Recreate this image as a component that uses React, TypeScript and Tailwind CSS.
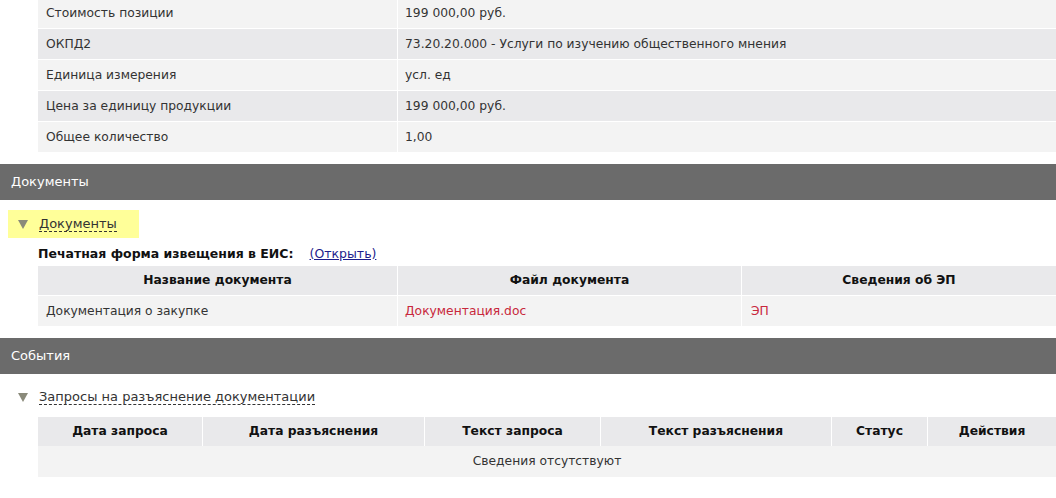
const font = { fontFamily: '"DejaVu Sans", Verdana, sans-serif' };

const positionRows = [
  { label: "Стоимость позиции", value: "199 000,00 руб." },
  { label: "ОКПД2", value: "73.20.20.000 - Услуги по изучению общественного мнения" },
  { label: "Единица измерения", value: "усл. ед" },
  { label: "Цена за единицу продукции", value: "199 000,00 руб." },
  { label: "Общее количество", value: "1,00" },
];

const requestCols = [
  { title: "Дата запроса", w: "w-[165px]" },
  { title: "Дата разъяснения", w: "w-[222px]" },
  { title: "Текст запроса", w: "w-[176px]" },
  { title: "Текст разъяснения", w: "w-[231px]" },
  { title: "Статус", w: "w-[96px]" },
  { title: "Действия", w: "flex-1" },
];

function Triangle() {
  return (
    <svg width="10" height="9" viewBox="0 0 10 9" className="shrink-0">
      <path d="M0 0 L10 0 L5 9 Z" fill="#8a8a7a" />
    </svg>
  );
}

function SectionBar({ title }: { title: string }) {
  return (
    <div className="h-[36px] bg-[#6b6b6b] text-white text-[13px] flex items-center pl-[11px]">
      {title}
    </div>
  );
}

export default function App() {
  return (
    <div className="w-[1056px] h-[498px] overflow-hidden bg-white text-[#333] text-[12.3px]" style={font}>
      {/* position details */}
      <div className="ml-[38px] -mt-[2px] flex flex-col gap-px">
        {positionRows.map((r, i) => (
          <div
            key={r.label}
            className={`flex h-[30px] ${i % 2 === 0 ? "bg-[#f3f3f3]" : "bg-[#e9e9eb]"}`}
          >
            <div className="w-[360px] flex items-center pl-[8px] border-r border-white">{r.label}</div>
            <div className="flex-1 flex items-center pl-[7px]">{r.value}</div>
          </div>
        ))}
      </div>

      <div className="mt-[12px]">
        <SectionBar title="Документы" />
      </div>

      {/* documents */}
      <div className="mt-[10px] ml-[8px] w-[131px] h-[28px] bg-[#ffff99] flex items-center pl-[10px] gap-[11px]">
        <Triangle />
        <span className="border-b border-dashed border-[#333] leading-[15px] text-[13px]">Документы</span>
      </div>
      <div className="ml-[38px] mt-[7px] flex items-center h-[18px] text-[12.5px]">
        <span className="font-bold text-[#111]">Печатная форма извещения в ЕИС:</span>
        <a className="ml-[16px] text-[#1c1c8c] underline">(Открыть)</a>
      </div>
      <div className="ml-[38px] mt-[3px] flex flex-col gap-px">
        <div className="flex h-[29px] bg-[#e9e9eb] font-bold text-[#111]">
          <div className="w-[360px] flex items-center justify-center border-r border-white">Название документа</div>
          <div className="w-[344px] flex items-center justify-center border-r border-white">Файл документа</div>
          <div className="flex-1 flex items-center justify-center">Сведения об ЭП</div>
        </div>
        <div className="flex h-[30px] bg-[#f3f3f3]">
          <div className="w-[360px] flex items-center pl-[8px] border-r border-white">Документация о закупке</div>
          <div className="w-[344px] flex items-center pl-[7px] border-r border-white text-[#c8283c]">Документация.doc</div>
          <div className="flex-1 flex items-center pl-[9px] text-[#c8283c]">ЭП</div>
        </div>
      </div>

      <div className="mt-[12px]">
        <SectionBar title="События" />
      </div>

      {/* requests */}
      <div className="mt-[14px] ml-[18px] flex items-center gap-[11px] h-[18px]">
        <Triangle />
        <span className="border-b border-dashed border-[#333] leading-[15px] text-[13px]">
          Запросы на разъяснение документации
        </span>
      </div>
      <div className="ml-[38px] mt-[11px] flex flex-col">
        <div className="flex h-[29px] bg-[#e9e9eb] font-bold text-[#111]">
          {requestCols.map((c, i) => (
            <div
              key={c.title}
              className={`${c.w} flex items-center justify-center ${i < requestCols.length - 1 ? "border-r border-white" : ""}`}
            >
              {c.title}
            </div>
          ))}
        </div>
        <div className="h-[31px] bg-[#f3f3f3] flex items-center justify-center">Сведения отсутствуют</div>
      </div>
    </div>
  );
}
